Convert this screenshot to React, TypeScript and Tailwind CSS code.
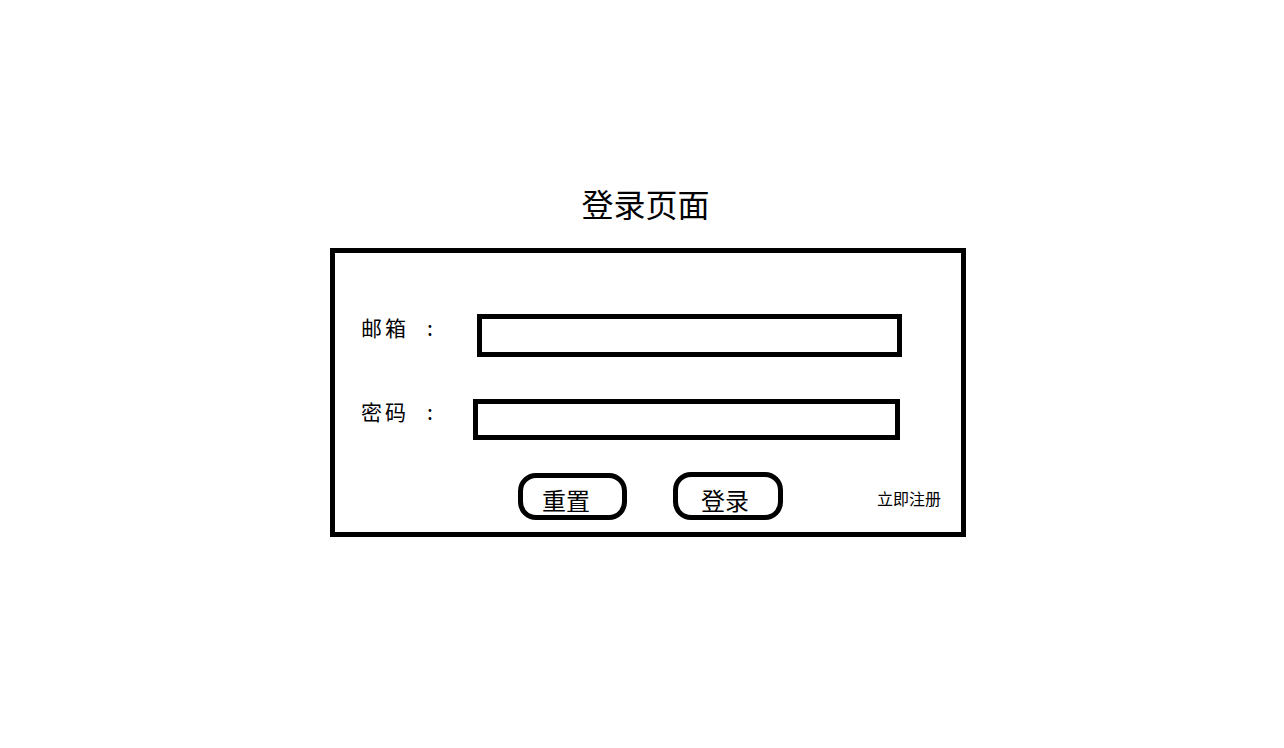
export default function App() {
  return (
    <div
      className="min-h-[748px] w-full bg-white pt-[187px] pl-[330px] text-black"
      style={{ fontFamily: '"Noto Sans CJK SC", "Noto Sans", sans-serif' }}
    >
      <div className="w-[636px] pr-[5px] text-center text-[32px] leading-none">登录页面</div>

      <div className="mt-[29px] h-[289px] w-[636px] border-[5px] border-black pl-[26px] pt-[61px]">
        {/* email */}
        <div className="flex items-start">
          <div className="mt-[3px] flex w-[116px] text-[21px] leading-none">
            <span>邮</span>
            <span className="ml-[3px]">箱</span>
            <span className="ml-[21px]">:</span>
          </div>
          <input type="text" className="h-[43px] w-[425px] border-[5px] border-black bg-white outline-none" />
        </div>

        {/* password */}
        <div className="mt-[42px] flex items-start">
          <div className="mt-[2px] flex w-[112px] text-[21px] leading-none">
            <span>密</span>
            <span className="ml-[3px]">码</span>
            <span className="ml-[21px]">:</span>
          </div>
          <input type="password" className="h-[41px] w-[427px] border-[5px] border-black bg-white outline-none" />
        </div>

        {/* actions */}
        <div className="mt-[33px] flex items-start">
          <button className="ml-[157px] h-[47px] w-[109px] rounded-[18px] border-[5px] border-black bg-white pl-[19px] pt-[6px] text-left text-[24px] leading-none">
            重置
          </button>
          <button className="-mt-px ml-[46px] h-[48px] w-[110px] rounded-[18px] border-[5px] border-black bg-white pl-[23px] pt-[8px] text-left text-[24px] leading-none">
            登录
          </button>
          <a className="ml-[94px] mt-[17px] text-[16px] leading-none">立即注册</a>
        </div>
      </div>
    </div>
  )
}
